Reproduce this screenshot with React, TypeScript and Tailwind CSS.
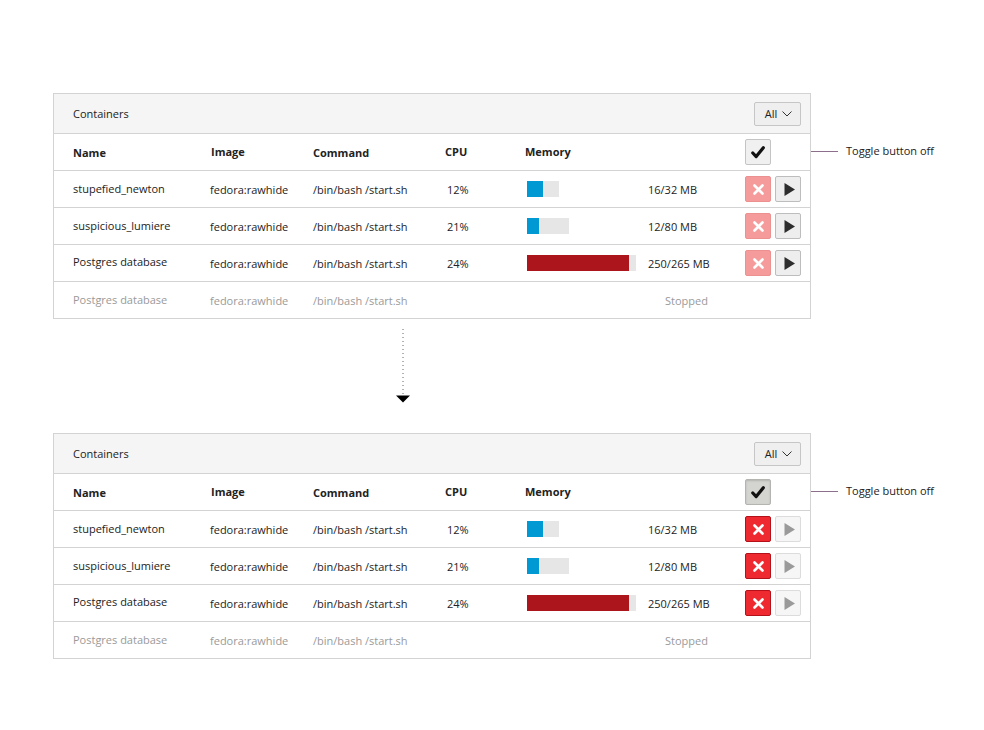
import React from 'react';

type Row = {
  name: string;
  image: string;
  command: string;
  cpu?: string;
  barWidth?: number;
  fillWidth?: number;
  barColor?: string;
  label: string;
  stopped?: boolean;
};

const ROWS: Row[] = [
  { name: 'stupefied_newton', image: 'fedora:rawhide', command: '/bin/bash /start.sh', cpu: '12%', barWidth: 32, fillWidth: 16, barColor: '#0099d3', label: '16/32 MB' },
  { name: 'suspicious_lumiere', image: 'fedora:rawhide', command: '/bin/bash /start.sh', cpu: '21%', barWidth: 42, fillWidth: 12, barColor: '#0099d3', label: '12/80 MB' },
  { name: 'Postgres database', image: 'fedora:rawhide', command: '/bin/bash /start.sh', cpu: '24%', barWidth: 109, fillWidth: 102, barColor: '#ad151d', label: '250/265 MB' },
  { name: 'Postgres database', image: 'fedora:rawhide', command: '/bin/bash /start.sh', label: 'Stopped', stopped: true },
];

const GRID = 'grid grid-cols-[137px_103px_132px_80px_123px_97px_56px] items-center pl-[19px]';

function CheckIcon() {
  return (
    <svg width="14" height="13" viewBox="0 0 14 13">
      <path d="M1.8 7 L5.2 10.6 L12.3 1.8" fill="none" stroke="#111" strokeWidth="3.2" strokeLinecap="round" strokeLinejoin="round" />
    </svg>
  );
}

function XIcon() {
  return (
    <svg width="11" height="11" viewBox="0 0 11 11">
      <path d="M1.5 1.5 L9.5 9.5 M9.5 1.5 L1.5 9.5" stroke="#fff" strokeWidth="2.6" strokeLinecap="round" />
    </svg>
  );
}

function PlayIcon({ color }: { color: string }) {
  return (
    <svg width="11" height="13" viewBox="0 0 11 13">
      <path d="M0.5 0 L11 6.5 L0.5 13 Z" fill={color} />
    </svg>
  );
}

function Panel({ pressed }: { pressed: boolean }) {
  return (
    <div className="flex items-start">
      <div className="w-[758px] border border-[#d3d3d3] bg-white">
        <div className="flex h-[40px] items-center justify-between border-b border-[#d3d3d3] bg-[#f5f5f5] pl-[19px] pr-[9px]">
          <span className="pt-[1px]">Containers</span>
          <button className="flex h-[24px] w-[47px] items-center justify-center gap-[5px] rounded-[2px] border border-[#c6c6c6] bg-[#efefef] pl-[2px]">
            <span>All</span>
            <svg width="10" height="6" viewBox="0 0 10 6">
              <path d="M0.5 0.5 L5 5 L9.5 0.5" fill="none" stroke="#333" strokeWidth="1" />
            </svg>
          </button>
        </div>

        <div className={`${GRID} h-[37px] border-b border-[#d3d3d3] font-bold`}>
          <span className="pt-[2px]">Name</span>
          <span className="pl-[1px]">Image</span>
          <span className="pt-[2px]">Command</span>
          <span>CPU</span>
          <span>Memory</span>
          <span />
          <button
            className={`flex h-[26px] w-[26px] items-center justify-center rounded-[2px] border ${
              pressed ? 'border-[#b4b4b0] bg-[#d4d4d0] shadow-[inset_0_1px_2px_rgba(0,0,0,0.15)]' : 'border-[#c4c4c4] bg-[#f0f0f0]'
            }`}
          >
            <CheckIcon />
          </button>
        </div>

        {ROWS.map((row, i) => (
          <div
            key={i}
            className={`${GRID} ${i < ROWS.length - 1 ? 'h-[37px] border-b border-[#d3d3d3]' : 'h-[36px]'} ${
              row.stopped ? 'text-[#9a9a9a]' : 'text-[#222]'
            }`}
          >
            <span className={i === 2 ? '-mt-[2px]' : ''}>{row.name}</span>
            <span className="pt-[1px]">{row.image}</span>
            <span className="pt-[1px]">{row.command}</span>
            <span className="pl-[2px] pt-[1px]">{row.cpu}</span>
            <div className="pl-[2px]">
              {row.barWidth && (
                <div className="flex h-[16px] bg-[#e6e6e6]" style={{ width: row.barWidth }}>
                  <div className="h-full" style={{ width: row.fillWidth, backgroundColor: row.barColor }} />
                </div>
              )}
            </div>
            <span className={row.stopped ? 'pl-[17px] pt-[2px]' : 'pt-[1px]'}>{row.label}</span>
            {row.stopped ? (
              <span />
            ) : (
              <div className="flex gap-[4px]">
                <button
                  className={`flex h-[26px] w-[26px] items-center justify-center rounded-[2px] border ${
                    pressed ? 'border-[#b3121a] bg-[#ee2a30]' : 'border-[#ec9090] bg-[#f59b9b]'
                  }`}
                >
                  <XIcon />
                </button>
                <button
                  className={`flex h-[26px] w-[26px] items-center justify-center rounded-[2px] border pl-[2px] ${
                    pressed ? 'border-[#dcdcdc] bg-[#f6f6f6]' : 'border-[#bdbdbd] bg-[#eeeeee]'
                  }`}
                >
                  <PlayIcon color={pressed ? '#9a9a9a' : '#2d2d2d'} />
                </button>
              </div>
            )}
          </div>
        ))}
      </div>

      <div className="mt-[49px] flex h-[18px] items-center">
        <div className="h-px w-[27px] bg-[#8b6f8b]" />
        <span className="ml-[8px] text-[#222]">Toggle button off</span>
      </div>
    </div>
  );
}

export default function App() {
  return (
    <div className="min-h-[730px] w-[984px] bg-white pl-[53px] pt-[93px] text-[11px] leading-[18px] text-[#222] [font-family:'Open_Sans',sans-serif]">
      <Panel pressed={false} />
      <div className="ml-[343px] h-[114px] pt-[10px]">
        <svg width="14" height="74" viewBox="0 0 14 74">
          <line x1="7" y1="0" x2="7" y2="65" stroke="#666" strokeWidth="1" strokeDasharray="1 3" />
          <path d="M0 66.5 L14 66.5 L7 73.5 Z" fill="#000" />
        </svg>
      </div>
      <Panel pressed={true} />
    </div>
  );
}
